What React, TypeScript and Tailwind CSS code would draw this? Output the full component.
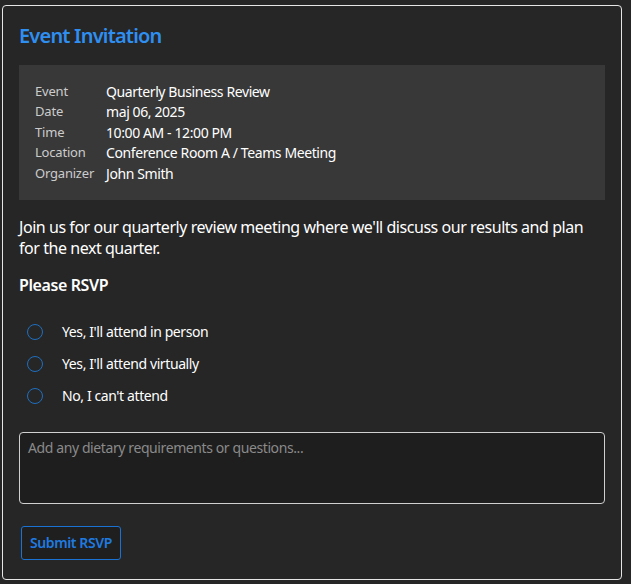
import { useState } from 'react';

const details = [
  { label: 'Event', value: 'Quarterly Business Review' },
  { label: 'Date', value: 'maj 06, 2025' },
  { label: 'Time', value: '10:00 AM - 12:00 PM' },
  { label: 'Location', value: 'Conference Room A / Teams Meeting' },
  { label: 'Organizer', value: 'John Smith' },
];

const options = [
  { id: 'person', label: "Yes, I'll attend in person" },
  { id: 'virtual', label: "Yes, I'll attend virtually" },
  { id: 'no', label: "No, I can't attend" },
];

const App = () => {
  const [choice, setChoice] = useState<string | null>(null);
  const [notes, setNotes] = useState('');

  return (
    <div
      className="min-h-[584px] w-[631px] bg-[#262626] pt-[5px] pl-[2px] text-white"
      style={{ fontFamily: '"Noto Sans", "Segoe UI", sans-serif' }}
    >
      <div className="w-[620px] h-[575px] rounded-[4px] border border-[#e6e6e6] bg-[#262626] p-4">
        <h1 className="text-[20px] leading-[28px] font-semibold tracking-[-0.8px] text-[#2f8ff0] mb-[15px]">
          Event Invitation
        </h1>

        {/* Event details */}
        <div className="bg-[#383838] px-4 py-4">
          {details.map((d) => (
            <div key={d.label} className="flex items-center h-[20.5px]">
              <div className="w-[71px] text-[13px] tracking-[-0.2px] text-[#cccccc]">{d.label}</div>
              <div className="text-[14px] tracking-[-0.4px] text-white">{d.value}</div>
            </div>
          ))}
        </div>

        <p className="mt-[17px] text-[16px] leading-[21px] tracking-[-0.45px] text-white">
          Join us for our quarterly review meeting where we'll discuss our results and plan for the next quarter.
        </p>

        <div className="mt-[16px] text-[16px] leading-[21px] font-semibold tracking-[-0.4px]">Please RSVP</div>

        <div className="mt-[20px] flex flex-col">
          {options.map((o) => (
            <label key={o.id} className="flex items-center h-[32px] pl-2 cursor-pointer">
              <span className="w-4 h-4 rounded-full border border-[#1f6fc0] flex items-center justify-center">
                {choice === o.id && <span className="w-2 h-2 rounded-full bg-[#1f6fc0]" />}
              </span>
              <input
                type="radio"
                name="rsvp"
                className="hidden"
                checked={choice === o.id}
                onChange={() => setChoice(o.id)}
              />
              <span className="ml-[19px] text-[14px] tracking-[-0.4px] text-white">{o.label}</span>
            </label>
          ))}
        </div>

        <textarea
          value={notes}
          onChange={(e) => setNotes(e.target.value)}
          placeholder="Add any dietary requirements or questions..."
          className="mt-[20px] block w-full h-[72px] resize-none rounded-[4px] border border-[#d0d0d0] bg-[#1e1e1e] px-2 py-[4px] text-[14px] tracking-[-0.4px] text-white placeholder:text-[#8a8a8a] outline-none"
        />

        <button className="mt-[22px] ml-[2px] h-[34px] px-[8px] rounded-[3px] border border-[#1a73d4] bg-[#1f1f1f] text-[14px] font-semibold tracking-[-0.4px] text-[#1f7ae0]">
          Submit RSVP
        </button>
      </div>
    </div>
  );
};

export default App;
